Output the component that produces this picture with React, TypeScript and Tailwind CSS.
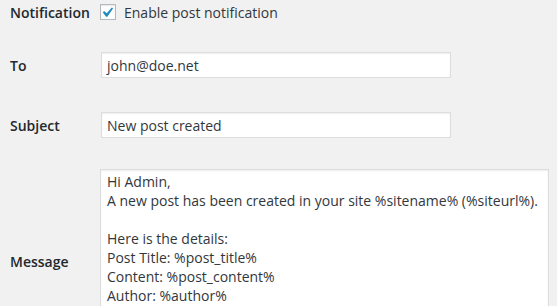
import React from "react";

export default function App() {
  const font = { fontFamily: '"Open Sans", "Noto Sans", sans-serif' };
  return (
    <div
      className="w-[557px] h-[306px] overflow-hidden bg-[#f1f1f1] text-[14px] text-[#32373c]"
      style={font}
    >
      <div className="flex flex-col">
        <div className="flex items-center h-[24px]">
          <div className="w-[100px] pl-[10px] font-semibold text-[#23282d]">Notification</div>
          <div className="flex items-center">
            <span className="w-[16px] h-[16px] border border-[#b4b9be] bg-white shadow-[inset_0_1px_2px_rgba(0,0,0,0.1)] flex items-center justify-center">
              <svg width="12" height="12" viewBox="5 4 12 11">
                <path d="M14.83 4.89l1.34.94-5.81 8.38H9.02L5.78 9.67l1.34-1.25 2.57 2.4z" fill="#1e8cbe" />
              </svg>
            </span>
            <span className="ml-[8px]">Enable post notification</span>
          </div>
        </div>
        <div className="flex items-center h-[26px] mt-[28px]">
          <div className="w-[101px] pl-[10px] font-semibold text-[#23282d]">To</div>
          <div className="w-[350px] h-[26px] border border-[#ddd] bg-white shadow-[inset_0_1px_2px_rgba(0,0,0,0.07)] px-[5px] flex items-center">
            john@doe.net
          </div>
        </div>
        <div className="flex items-center h-[26px] mt-[34px]">
          <div className="w-[101px] pl-[10px] font-semibold text-[#23282d]">Subject</div>
          <div className="w-[350px] h-[26px] border border-[#ddd] bg-white shadow-[inset_0_1px_2px_rgba(0,0,0,0.07)] px-[5px] flex items-center">
            New post created
          </div>
        </div>
        <div className="flex items-center mt-[31px]">
          <div className="w-[100px] pl-[10px] font-semibold text-[#23282d]">Message</div>
          <div className="w-[449px] h-[184px] border border-[#ddd] bg-white shadow-[inset_0_1px_2px_rgba(0,0,0,0.07)] px-[6px] pt-[2px] leading-[19px]">
            <div>Hi Admin,</div>
            <div>A new post has been created in your site %sitename% (%siteurl%).</div>
            <div>&nbsp;</div>
            <div>Here is the details:</div>
            <div>Post Title: %post_title%</div>
            <div>Content: %post_content%</div>
            <div>Author: %author%</div>
          </div>
        </div>
      </div>
    </div>
  );
}
